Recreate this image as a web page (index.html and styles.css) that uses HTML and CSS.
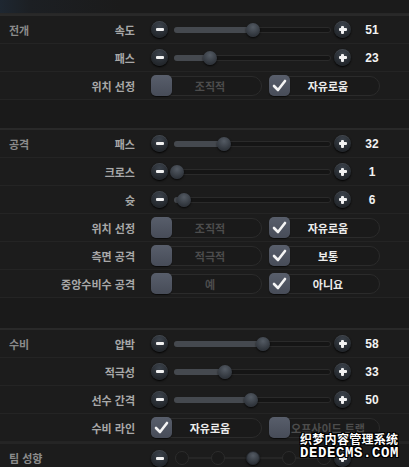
FILE: index.html
```html
<!DOCTYPE html>
<html lang="ko">
<head>
  <meta charset="UTF-8" />
  <title>팀 전술</title>
  <link rel="stylesheet" href="styles.css">
</head>
<body>
  <div class="panel">
    <div class="topbar"></div>

    <!-- 전개 -->
    <div class="group">
      <div class="row">
        <span class="cat">전개</span>
        <span class="name">속도</span>
        <div class="slider" style="--v:51">
          <span class="btn minus"></span>
          <span class="track"><span class="fill"></span><span class="thumb"></span></span>
          <span class="btn plus"></span>
          <span class="val">51</span>
        </div>
      </div>
      <div class="row">
        <span class="cat"></span>
        <span class="name">패스</span>
        <div class="slider" style="--v:23">
          <span class="btn minus"></span>
          <span class="track"><span class="fill"></span><span class="thumb"></span></span>
          <span class="btn plus"></span>
          <span class="val">23</span>
        </div>
      </div>
      <div class="row">
        <span class="cat"></span>
        <span class="name">위치 선정</span>
        <div class="choice">
          <span class="opt"><span class="box"></span><span class="pill">조직적</span></span>
          <span class="opt on"><span class="box"><svg viewBox="0 0 21 21"><polyline points="5,11 9,15 16,6" /></svg></span><span class="pill">자유로움</span></span>
        </div>
      </div>
    </div>
    <div class="spacer"></div>

    <!-- 공격 -->
    <div class="group">
      <div class="row">
        <span class="cat">공격</span>
        <span class="name">패스</span>
        <div class="slider" style="--v:32">
          <span class="btn minus"></span>
          <span class="track"><span class="fill"></span><span class="thumb"></span></span>
          <span class="btn plus"></span>
          <span class="val">32</span>
        </div>
      </div>
      <div class="row">
        <span class="cat"></span>
        <span class="name">크로스</span>
        <div class="slider" style="--v:1">
          <span class="btn minus"></span>
          <span class="track"><span class="fill"></span><span class="thumb"></span></span>
          <span class="btn plus"></span>
          <span class="val">1</span>
        </div>
      </div>
      <div class="row">
        <span class="cat"></span>
        <span class="name">슛</span>
        <div class="slider" style="--v:6">
          <span class="btn minus"></span>
          <span class="track"><span class="fill"></span><span class="thumb"></span></span>
          <span class="btn plus"></span>
          <span class="val">6</span>
        </div>
      </div>
      <div class="row">
        <span class="cat"></span>
        <span class="name">위치 선정</span>
        <div class="choice">
          <span class="opt"><span class="box"></span><span class="pill">조직적</span></span>
          <span class="opt on"><span class="box"><svg viewBox="0 0 21 21"><polyline points="5,11 9,15 16,6" /></svg></span><span class="pill">자유로움</span></span>
        </div>
      </div>
      <div class="row">
        <span class="cat"></span>
        <span class="name">측면 공격</span>
        <div class="choice">
          <span class="opt"><span class="box"></span><span class="pill">적극적</span></span>
          <span class="opt on"><span class="box"><svg viewBox="0 0 21 21"><polyline points="5,11 9,15 16,6" /></svg></span><span class="pill">보통</span></span>
        </div>
      </div>
      <div class="row">
        <span class="cat"></span>
        <span class="name">중앙수비수 공격</span>
        <div class="choice">
          <span class="opt"><span class="box"></span><span class="pill">예</span></span>
          <span class="opt on"><span class="box"><svg viewBox="0 0 21 21"><polyline points="5,11 9,15 16,6" /></svg></span><span class="pill">아니요</span></span>
        </div>
      </div>
    </div>
    <div class="spacer tall"></div>

    <!-- 수비 -->
    <div class="group">
      <div class="row">
        <span class="cat">수비</span>
        <span class="name">압박</span>
        <div class="slider" style="--v:58">
          <span class="btn minus"></span>
          <span class="track"><span class="fill"></span><span class="thumb"></span></span>
          <span class="btn plus"></span>
          <span class="val">58</span>
        </div>
      </div>
      <div class="row">
        <span class="cat"></span>
        <span class="name">적극성</span>
        <div class="slider" style="--v:33">
          <span class="btn minus"></span>
          <span class="track"><span class="fill"></span><span class="thumb"></span></span>
          <span class="btn plus"></span>
          <span class="val">33</span>
        </div>
      </div>
      <div class="row">
        <span class="cat"></span>
        <span class="name">선수 간격</span>
        <div class="slider" style="--v:50">
          <span class="btn minus"></span>
          <span class="track"><span class="fill"></span><span class="thumb"></span></span>
          <span class="btn plus"></span>
          <span class="val">50</span>
        </div>
      </div>
      <div class="row">
        <span class="cat"></span>
        <span class="name">수비 라인</span>
        <div class="choice">
          <span class="opt on"><span class="box"><svg viewBox="0 0 21 21"><polyline points="5,11 9,15 16,6" /></svg></span><span class="pill">자유로움</span></span>
          <span class="opt"><span class="box"></span><span class="pill">오프사이드 트랩</span></span>
        </div>
      </div>
    </div>

    <!-- 팀 성향 -->
    <div class="group last">
      <div class="row">
        <span class="cat">팀 성향</span>
        <span class="name"></span>
        <div class="slider">
          <span class="btn minus"></span>
          <span class="steps">
            <span class="stop"></span>
            <span class="stop"></span>
            <span class="stop cur"></span>
            <span class="stop"></span>
            <span class="stop"></span>
          </span>
          <span class="btn plus"></span>
          <span class="val"></span>
        </div>
      </div>
    </div>

    <div class="mark">
      <div class="mark-cn">织梦内容管理系统</div>
      <div class="mark-en">DEDECMS.COM</div>
    </div>
  </div>
</body>
</html>
```

FILE: styles.css
```css
body {
  margin: 0;
  background: #1c1c1c;
  font-family: "Noto Sans CJK KR", "Noto Sans", sans-serif;
}

.panel {
  position: relative;
  width: 409px;
  height: 467px;
  overflow: hidden;
  background: #1c1c1c;
}

.topbar {
  height: 13px;
  border-bottom: 1px solid #272727;
  background: linear-gradient(90deg, #1e2731 0, #1c1f23 30px, #1b1b1b 120px);
}

.group {
  border-top: 2px solid #292929;
}

.group:first-of-type {
  border-top: none;
}

.group.last {
  border-top: 2px solid #252525;
}

.spacer {
  height: 28px;
  background: #1a1a1a;
}

.spacer.tall {
  height: 30px;
}

.row {
  display: grid;
  grid-template-columns: 44px 75px auto;
  column-gap: 16px;
  align-items: center;
  height: 28px;
  box-sizing: border-box;
  border-bottom: 1px solid #242424;
}

.group.last .row {
  border-bottom: none;
}

.cat {
  padding-left: 9px;
  font-size: 11px;
  font-weight: bold;
  color: #8b8b8b;
  white-space: nowrap;
}

.name {
  text-align: right;
  font-size: 11px;
  font-weight: bold;
  color: #a8a8a8;
  white-space: nowrap;
}

/* sliders */
.slider {
  display: flex;
  align-items: center;
}

.btn {
  position: relative;
  flex: none;
  width: 17px;
  height: 17px;
  border-radius: 50%;
  background: radial-gradient(circle at 50% 30%, #3c434c, #23272c 70%);
  box-shadow: 0 1px 2px #000, inset 0 1px 0 rgba(255, 255, 255, 0.08);
}

.btn::before {
  content: '';
  position: absolute;
  left: 4.5px;
  top: 7px;
  width: 8px;
  height: 3px;
  border-radius: 1px;
  background: #f2f2f2;
}

.btn.plus::after {
  content: '';
  position: absolute;
  left: 7px;
  top: 4.5px;
  width: 3px;
  height: 8px;
  border-radius: 1px;
  background: #f2f2f2;
}

.track {
  position: relative;
  flex: none;
  width: 157px;
  height: 6px;
  margin: 0 3px 0 6px;
  border-radius: 3px;
  background: #151515;
  box-shadow: inset 0 0 0 1px #2a2a2a;
}

.fill {
  position: absolute;
  left: 0;
  top: 0;
  bottom: 0;
  width: calc(1px + var(--v) * 1.525px);
  border-radius: 3px;
  background: #45494f;
}

.thumb {
  position: absolute;
  top: -4px;
  left: calc(var(--v) * 1.525px - 6px);
  width: 14px;
  height: 14px;
  border-radius: 50%;
  background: radial-gradient(circle at 50% 30%, #545b64, #30353c 70%);
  box-shadow: 0 1px 2px rgba(0, 0, 0, 0.8);
}

.val {
  width: 30px;
  margin-left: 6px;
  text-align: center;
  color: #f2f2f2;
  font: bold 12px "Liberation Sans", sans-serif;
}

/* stepped slider */
.steps {
  position: relative;
  flex: none;
  display: flex;
  justify-content: space-between;
  align-items: center;
  width: 156px;
  height: 14px;
  margin: 0 3px 0 6px;
  padding-left: 1px;
}

.steps::before {
  content: '';
  position: absolute;
  left: 4px;
  right: 4px;
  top: 6px;
  height: 2px;
  background: #262626;
}

.stop {
  position: relative;
  width: 12px;
  height: 12px;
  border: 1px solid #2c2c2c;
  border-radius: 50%;
  background: #1a1a1a;
}

.stop.cur {
  border-color: #24282d;
  background: radial-gradient(circle at 50% 30%, #545b64, #30353c 70%);
  box-shadow: 0 1px 2px rgba(0, 0, 0, 0.8);
}

/* choices */
.choice {
  display: flex;
  gap: 7px;
}

.opt {
  display: flex;
  align-items: center;
  width: 111px;
}

.box {
  position: relative;
  z-index: 1;
  flex: none;
  width: 21px;
  height: 21px;
  border-radius: 5px;
  background: linear-gradient(#585e6b, #474c58);
  box-shadow: 0 1px 1px rgba(0, 0, 0, 0.6);
}

.box svg {
  display: block;
  width: 21px;
  height: 21px;
}

.box polyline {
  fill: none;
  stroke: #f4f4f4;
  stroke-width: 2.6;
  stroke-linecap: round;
  stroke-linejoin: round;
}

.pill {
  flex: 1;
  height: 18px;
  margin-left: -14px;
  border: 1px solid #2b2b2b;
  border-radius: 10px;
  background: #1a1a1a;
  text-align: center;
  line-height: 18px;
  font-size: 11px;
  font-weight: bold;
  color: #4c4c4c;
  white-space: nowrap;
}

.opt.on .pill {
  color: #ececec;
}

/* watermark */
.mark {
  position: absolute;
  left: 300px;
  top: 431px;
  width: 100px;
  color: #fff;
  text-shadow: 1px 0 0 #000, -1px 0 0 #000, 0 1px 0 #000, 0 -1px 0 #000, 1px 1px 0 #000, -1px -1px 0 #000, 1px -1px 0 #000, -1px 1px 0 #000;
}

.mark-cn {
  font: bold 12px "Noto Sans CJK SC", sans-serif;
  letter-spacing: 0.3px;
  line-height: 16px;
  white-space: nowrap;
}

.mark-en {
  font-family: "Liberation Mono", monospace;
  font-size: 14px;
  font-weight: bold;
  letter-spacing: 0.6px;
  line-height: 12px;
  white-space: nowrap;
}
```
